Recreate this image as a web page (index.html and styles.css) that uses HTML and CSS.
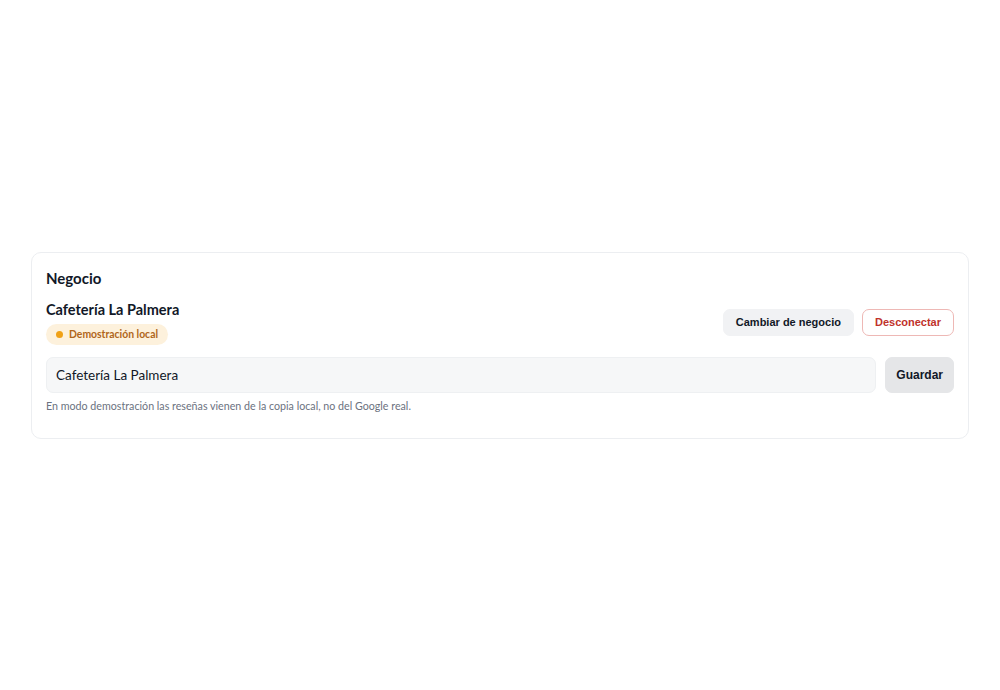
FILE: index.html
```html
<!DOCTYPE html>
<html lang="es">
<head>
<meta charset="utf-8">
<title>Negocio</title>
<link rel="stylesheet" href="styles.css">
</head>
<body>
<main class="page">
  <section class="card">
    <h2 class="card-title">Negocio</h2>
    <div class="biz-row">
      <div class="biz-info">
        <div class="biz-name">Cafetería La Palmera</div>
        <span class="badge"><span class="dot"></span>Demostración local</span>
      </div>
      <div class="actions">
        <button class="btn btn-soft">Cambiar de negocio</button>
        <button class="btn btn-danger">Desconectar</button>
      </div>
    </div>
    <div class="name-row">
      <input class="name-input" type="text" value="Cafetería La Palmera">
      <button class="btn btn-save">Guardar</button>
    </div>
    <p class="hint">En modo demostración las reseñas vienen de la copia local, no del Google real.</p>
  </section>
</main>
</body>
</html>
```
FILE: styles.css
```css
* { box-sizing: border-box; }
html, body { margin: 0; padding: 0; background: #fff; }
body { font-family: Lato, "Noto Sans", sans-serif; color: #111827; }
.page {
  min-height: 690px;
  display: flex;
  align-items: center;
  padding: 0 31px;
}
.card {
  width: 100%;
  border: 1px solid #eceef1;
  border-radius: 10px;
  padding: 14px 14px 25px;
  background: #fff;
}
.card-title {
  margin: 0;
  font-size: 15px;
  font-weight: 700;
  line-height: 22px;
}
.biz-row {
  margin-top: 11px;
  display: flex;
  align-items: center;
  justify-content: space-between;
}
.biz-info { display: flex; flex-direction: column; align-items: flex-start; gap: 4px; }
.biz-name { font-size: 14.5px; font-weight: 700; line-height: 20px; }
.badge {
  display: inline-flex;
  align-items: center;
  gap: 6px;
  height: 21px;
  padding: 0 10px;
  border-radius: 11px;
  background: #fdf1dc;
  color: #b0661a;
  font-size: 10.4px;
  font-weight: 700;
}
.dot { width: 7px; height: 7px; border-radius: 50%; background: #f0a116; }
.actions { display: flex; gap: 8px; }
.btn {
  font-family: "Liberation Sans", Arial, sans-serif;
  font-weight: 700;
  font-size: 12px;
  border-radius: 7px;
  cursor: pointer;
}
.btn-soft {
  height: 27px;
  padding: 0 12px;
  font-size: 11px;
  background: #f1f2f4;
  border: 1px solid #f1f2f4;
  color: #111827;
}
.btn-danger {
  height: 27px;
  padding: 0 12px;
  font-size: 11px;
  background: #fff;
  border: 1px solid #eeb8b5;
  color: #c0322b;
}
.name-row { margin-top: 12px; display: flex; gap: 9px; }
.name-input {
  flex: 1;
  height: 36px;
  border: 1px solid #eef0f2;
  background: #f6f7f8;
  border-radius: 7px;
  padding: 0 9px;
  font-family: Lato, "Noto Sans", sans-serif;
  font-size: 13.5px;
  color: #111827;
  outline: none;
}
.btn-save {
  height: 36px;
  padding: 0 10px;
  background: #e5e6e8;
  border: 1px solid #e5e6e8;
  color: #111827;
}
.hint {
  margin: 6px 0 0;
  font-size: 10.7px;
  line-height: 14px;
  color: #6b7280;
}
```
